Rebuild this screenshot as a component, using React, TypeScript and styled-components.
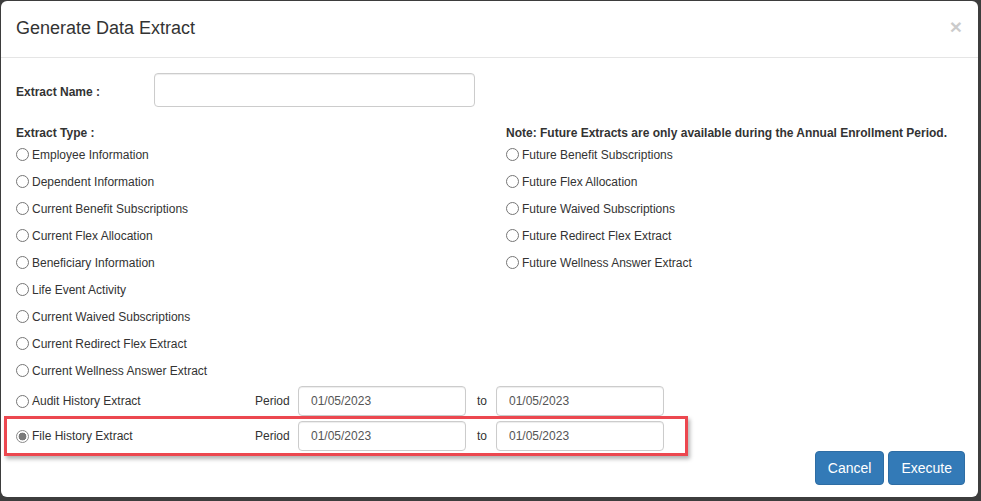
import React from 'react';
import styled, { createGlobalStyle } from 'styled-components';

const GlobalStyle = createGlobalStyle`
    html, body {
        margin: 0;
        padding: 0;
        background: #3d3d3d;
        font-family: "Liberation Sans", Arial, sans-serif;
        color: #333;
    }
`;

const Dialog = styled.div`
    position: relative;
    box-sizing: border-box;
    width: 977px;
    height: 496px;
    margin: 1px 3px 4px 1px;
    background: #fff;
    border-radius: 6px;
    display: flex;
    flex-direction: column;
`;

const Header = styled.div`
    height: 57px;
    box-sizing: border-box;
    border-bottom: 1px solid #e5e5e5;
    display: flex;
    align-items: center;
    justify-content: space-between;
    padding: 0 16px 0 15px;
`;

const Title = styled.h4`
    margin: 0;
    font-size: 18px;
    font-weight: normal;
    color: #333;
    padding-bottom: 1px;
`;

const Close = styled.button`
    border: none;
    background: none;
    padding: 0;
    font-family: "Liberation Sans", Arial, sans-serif;
    font-size: 21px;
    font-weight: bold;
    line-height: 1;
    color: #000;
    opacity: 0.2;
    margin-top: -6px;
    cursor: pointer;
`;

const Body = styled.div`
    padding: 15px 16px 0 15px;
    font-size: 12px;
`;

const NameRow = styled.div`
    display: flex;
    align-items: center;
    height: 34px;
`;

const Label = styled.label`
    font-weight: bold;
    font-size: 12px;
    width: 138px;
    padding-top: 4px;
`;

const TextInput = styled.input<{ $w: number; $h: number }>`
    box-sizing: border-box;
    width: ${p => p.$w}px;
    height: ${p => p.$h}px;
    border: 1px solid #ccc;
    border-radius: 4px;
    padding: 0 12px;
    font-family: "Liberation Sans", Arial, sans-serif;
    font-size: 12px;
    color: #555;
    background: #fff;
    box-shadow: inset 0 1px 1px rgba(0,0,0,0.075);
    outline: none;
`;

const Columns = styled.div`
    display: grid;
    grid-template-columns: 490px 1fr;
    margin-top: 19px;
`;

const Column = styled.div`
    display: flex;
    flex-direction: column;
`;

const ColumnTitle = styled.div`
    font-weight: bold;
    font-size: 12px;
    height: 15px;
    line-height: 14px;
`;

const RadioRow = styled.label`
    display: flex;
    align-items: center;
    height: 27px;
    font-size: 12px;
    color: #333;
`;

const Radio = styled.input.attrs({ type: 'radio' })`
    appearance: none;
    box-sizing: border-box;
    width: 13px;
    height: 13px;
    margin: 0 3px 0 0;
    border: 1px solid #767676;
    border-radius: 50%;
    background: #fff;
    flex: none;

    &:checked {
        border-color: #8a8a8a;
        background: radial-gradient(circle, #7a7a7a 0 3.6px, #fff 4.2px);
    }
`;

const PeriodRow = styled.div<{ $top: number }>`
    display: flex;
    align-items: center;
    height: 30px;
    margin-top: ${p => p.$top}px;
`;

const PeriodChoice = styled.label`
    display: flex;
    align-items: center;
    width: 239px;
    font-size: 12px;
`;

const PeriodText = styled.span<{ $w: number; $indent?: number }>`
    box-sizing: border-box;
    width: ${p => p.$w}px;
    padding-left: ${p => p.$indent || 0}px;
    font-size: 12px;
`;

const Highlight = styled.div`
    position: absolute;
    left: 3px;
    top: 415px;
    width: 684px;
    height: 40px;
    box-sizing: border-box;
    border: 3px solid #ec474f;
    box-shadow: 2px 3px 4px rgba(0,0,0,0.3);
    pointer-events: none;
`;

const Footer = styled.div`
    display: flex;
    justify-content: flex-end;
    gap: 4px;
    padding: 0 13px 0 0;
`;

const Button = styled.button`
    height: 34px;
    padding: 0 12px;
    background: #337ab7;
    border: 1px solid #2e6da4;
    border-radius: 4px;
    color: #fff;
    font-family: "Liberation Sans", Arial, sans-serif;
    font-size: 14px;
    cursor: pointer;
`;

const currentTypes = [
    'Employee Information',
    'Dependent Information',
    'Current Benefit Subscriptions',
    'Current Flex Allocation',
    'Beneficiary Information',
    'Life Event Activity',
    'Current Waived Subscriptions',
    'Current Redirect Flex Extract',
    'Current Wellness Answer Extract',
];

const futureTypes = [
    'Future Benefit Subscriptions',
    'Future Flex Allocation',
    'Future Waived Subscriptions',
    'Future Redirect Flex Extract',
    'Future Wellness Answer Extract',
];

const periodTypes = [
    { name: 'Audit History Extract', top: 2 },
    { name: 'File History Extract', top: 5 },
];

const App: React.FC = () => {
    const [selected, setSelected] = React.useState('File History Extract');

    return (
        <>
            <GlobalStyle />
            <Dialog>
                <Header>
                    <Title>Generate Data Extract</Title>
                    <Close>×</Close>
                </Header>
                <Body>
                    <NameRow>
                        <Label>Extract Name :</Label>
                        <TextInput $w={321} $h={34} />
                    </NameRow>
                    <Columns>
                        <Column>
                            <ColumnTitle>Extract Type :</ColumnTitle>
                            {currentTypes.map(t => (
                                <RadioRow key={t}>
                                    <Radio name="type" checked={selected === t} onChange={() => setSelected(t)} />
                                    {t}
                                </RadioRow>
                            ))}
                        </Column>
                        <Column>
                            <ColumnTitle>Note: Future Extracts are only available during the Annual Enrollment Period.</ColumnTitle>
                            {futureTypes.map(t => (
                                <RadioRow key={t}>
                                    <Radio name="type" checked={selected === t} onChange={() => setSelected(t)} />
                                    {t}
                                </RadioRow>
                            ))}
                        </Column>
                    </Columns>
                    {periodTypes.map(p => (
                        <PeriodRow key={p.name} $top={p.top}>
                            <PeriodChoice>
                                <Radio name="type" checked={selected === p.name} onChange={() => setSelected(p.name)} />
                                {p.name}
                            </PeriodChoice>
                            <PeriodText $w={43}>Period</PeriodText>
                            <TextInput $w={168} $h={30} defaultValue="01/05/2023" />
                            <PeriodText $w={30} $indent={11}>to</PeriodText>
                            <TextInput $w={168} $h={30} defaultValue="01/05/2023" />
                        </PeriodRow>
                    ))}
                </Body>
                <Footer>
                    <Button>Cancel</Button>
                    <Button>Execute</Button>
                </Footer>
                <Highlight />
            </Dialog>
        </>
    );
};

export default App;
